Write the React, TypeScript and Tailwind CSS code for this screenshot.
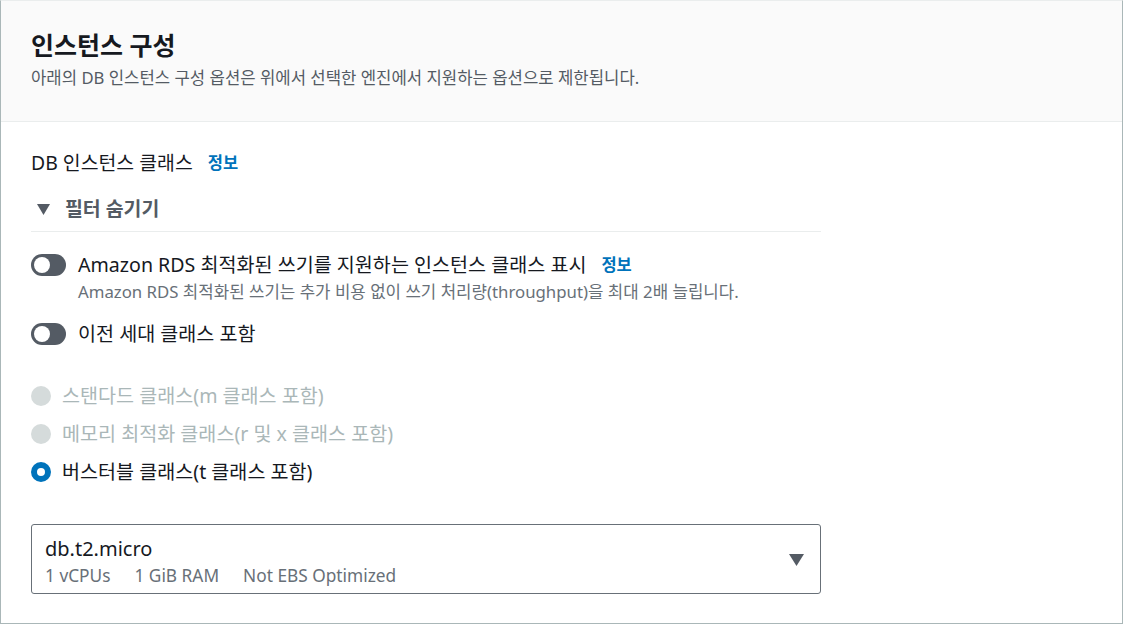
import React from "react";

const font = { fontFamily: '"Noto Sans", "Noto Sans CJK KR", sans-serif' };

function Toggle() {
  return (
    <span className="relative inline-flex h-[22px] w-[35px] shrink-0 items-center rounded-full bg-[#545b64]">
      <span className="absolute left-[3px] h-[16px] w-[16px] rounded-full bg-white" />
    </span>
  );
}

function Radio({ checked, disabled }: { checked?: boolean; disabled?: boolean }) {
  if (checked)
    return <span className="h-[20px] w-[20px] shrink-0 rounded-full border-[6px] border-[#0073bb] bg-white" />;
  return <span className={"h-[20px] w-[20px] shrink-0 rounded-full " + (disabled ? "bg-[#d5dbdb]" : "bg-white border border-[#687078]")} />;
}

export default function App() {
  return (
    <div style={font} className="h-[625px] w-[1124px] bg-white">
      <div className="flex h-[624px] w-[1123px] flex-col border-x border-b border-t border-[#aab7b8] border-t-[#eaeded]">
        <div className="border-b border-[#eaeded] bg-[#fafafa] px-[30px] pb-[32px] pt-[29px]">
          <h2 className="text-[25px] font-bold leading-[30px] text-[#16191f]">인스턴스 구성</h2>
          <p className="mt-[7px] text-[16.7px] leading-[22px] text-[#545b64]">
            아래의 DB 인스턴스 구성 옵션은 위에서 선택한 엔진에서 지원하는 옵션으로 제한됩니다.
          </p>
        </div>
        <div className="px-[30px] pt-[29px]">
          <div className="flex items-center text-[19.4px] leading-[24px] text-[#16191f]">
            <span>DB 인스턴스 클래스</span>
            <span className="ml-[15px] text-[16.5px] font-bold text-[#0073bb]">정보</span>
          </div>
          <div className="mt-[22px] w-[790px] border-b border-[#eaeded] pb-[10px]">
            <div className="flex items-center pl-[6px] text-[19.4px] font-bold leading-[24px] text-[#545b64]">
              <svg width="13" height="11" viewBox="0 0 13 11" className="mr-[15px]">
                <path d="M0 0 H13 L6.5 11 Z" fill="#545b64" />
              </svg>
              <span>필터 숨기기</span>
            </div>
          </div>

          <div className="mt-[21px] flex items-center gap-[12px]">
            <Toggle />
            <div className="flex items-center text-[19.6px] leading-[24px] text-[#16191f]">
              <span>Amazon RDS 최적화된 쓰기를 지원하는 인스턴스 클래스 표시</span>
              <span className="ml-[15px] text-[16.5px] font-bold text-[#0073bb]">정보</span>
            </div>
          </div>
          <p className="ml-[47px] mt-[5px] text-[16.8px] leading-[20px] text-[#687078]">
            Amazon RDS 최적화된 쓰기는 추가 비용 없이 쓰기 처리량(throughput)을 최대 2배 늘립니다.
          </p>

          <div className="mt-[20px] flex items-center gap-[12px]">
            <Toggle />
            <span className="text-[19.6px] leading-[24px] text-[#16191f]">이전 세대 클래스 포함</span>
          </div>

          <div className="mt-[38px] flex flex-col gap-[14px] text-[19.6px] leading-[24px]">
            <div className="flex items-center gap-[11px]">
              <Radio disabled />
              <span className="text-[#aab7b8]">스탠다드 클래스(m 클래스 포함)</span>
            </div>
            <div className="flex items-center gap-[11px]">
              <Radio disabled />
              <span className="text-[#aab7b8]">메모리 최적화 클래스(r 및 x 클래스 포함)</span>
            </div>
            <div className="flex items-center gap-[11px]">
              <Radio checked />
              <span className="text-[#16191f]">버스터블 클래스(t 클래스 포함)</span>
            </div>
          </div>

          <div className="mt-[40px] flex h-[70px] w-[790px] items-start rounded-[3px] border border-[#687078] pl-[13px] pr-[16px] pt-[12px]">
            <div className="flex flex-1 flex-col">
              <span className="text-[20px] leading-[24px] text-[#16191f]">db.t2.micro</span>
              <div className="mt-[4px] flex gap-[24px] text-[17.3px] leading-[22px] text-[#687078]">
                <span>1 vCPUs</span>
                <span>1 GiB RAM</span>
                <span>Not EBS Optimized</span>
              </div>
            </div>
            <svg width="15" height="12" viewBox="0 0 15 12" className="mt-[17px]">
              <path d="M0 0 H15 L7.5 12 Z" fill="#545b64" />
            </svg>
          </div>
        </div>
      </div>
    </div>
  );
}
